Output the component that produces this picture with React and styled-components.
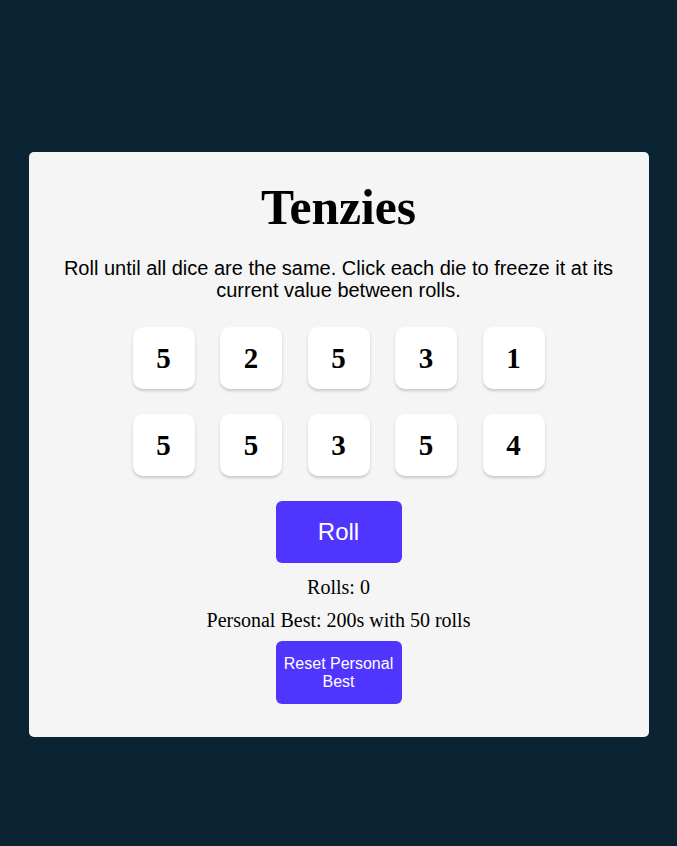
import React from "react";
import styled, { createGlobalStyle } from "styled-components";

const GlobalStyle = createGlobalStyle`
  body {
    margin: 0;
    background: #0b2434;
    font-family: "Liberation Serif", serif;
  }
`;

const Page = styled.div`
  min-height: 846px;
  display: flex;
  justify-content: center;
  align-items: flex-start;
  padding-top: 152px;
  box-sizing: border-box;
`;

const Card = styled.main`
  width: 620px;
  height: 585px;
  box-sizing: border-box;
  background: #f5f5f5;
  border-radius: 5px;
  display: flex;
  flex-direction: column;
  align-items: center;
  padding: 28px 32px 32px;
`;

const Title = styled.h1`
  margin: 0;
  font-family: "Liberation Serif", serif;
  font-size: 49.6px;
  font-weight: 700;
  line-height: 56px;
  color: #000;
`;

const Intro = styled.p`
  margin: 21px 0 0;
  font-family: "Liberation Sans", Arial, sans-serif;
  font-size: 20px;
  line-height: 22px;
  text-align: center;
  color: #000;
`;

const DiceGrid = styled.div`
  margin-top: 26px;
  display: grid;
  grid-template-columns: repeat(5, 62px);
  column-gap: 25.5px;
  row-gap: 25px;
`;

const Die = styled.button`
  width: 62px;
  height: 62px;
  border: none;
  border-radius: 10px;
  background: ${(p) => (p.held ? "#59e391" : "#ffffff")};
  box-shadow: 0 2px 3px rgba(0, 0, 0, 0.18);
  font-family: "Liberation Serif", serif;
  font-size: 29px;
  font-weight: 700;
  color: #000;
  padding: 0;
  cursor: pointer;
`;

const ActionButton = styled.button`
  width: 126px;
  height: ${(p) => (p.tall ? "63px" : "62px")};
  border: none;
  border-radius: 6px;
  background: #5035ff;
  color: #fff;
  font-family: "Liberation Sans", Arial, sans-serif;
  font-size: ${(p) => (p.small ? "16px" : "24px")};
  line-height: ${(p) => (p.small ? "18px" : "normal")};
  padding: 0 6px;
  cursor: pointer;
`;

const RollButton = styled(ActionButton)`
  margin-top: 25px;
`;

const Stat = styled.p`
  margin: ${(p) => p.gap || "0"} 0 0;
  font-family: "Liberation Serif", serif;
  font-size: 20px;
  line-height: 22px;
  color: #000;
`;

const ResetButton = styled(ActionButton)`
  margin-top: 10px;
`;

const dice = [5, 2, 5, 3, 1, 5, 5, 3, 5, 4];

export default function App() {
  return (
    <>
      <GlobalStyle />
      <Page>
        <Card>
          <Title>Tenzies</Title>
          <Intro>
            Roll until all dice are the same. Click each die to freeze it at its
            current value between rolls.
          </Intro>
          <DiceGrid>
            {dice.map((v, i) => (
              <Die key={i}>{v}</Die>
            ))}
          </DiceGrid>
          <RollButton>Roll</RollButton>
          <Stat gap="13px">Rolls: 0</Stat>
          <Stat gap="11px">Personal Best: 200s with 50 rolls</Stat>
          <ResetButton small tall>Reset Personal Best</ResetButton>
        </Card>
      </Page>
    </>
  );
}
